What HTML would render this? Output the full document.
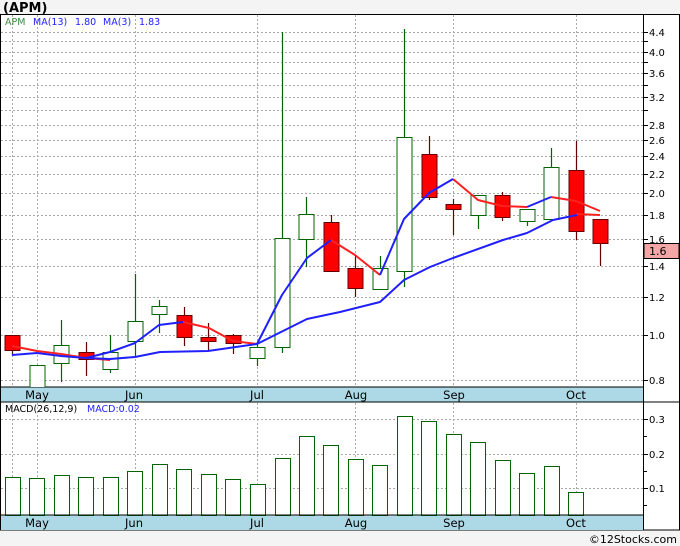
<!DOCTYPE html>
<html><head><meta charset="utf-8"><style>
html,body{margin:0;padding:0;background:#f4f4f4;}
svg{display:block;font-family:"DejaVu Sans","Liberation Sans",sans-serif;}
</style></head><body>
<svg width="680" height="546" viewBox="0 0 680 546" xmlns="http://www.w3.org/2000/svg">
<rect x="0" y="0" width="680" height="546" fill="#f4f4f4"/>
<text x="3" y="12" font-size="13" font-weight="bold" fill="#000">(APM)</text>
<rect x="0.5" y="14.5" width="679" height="515.5" fill="#fff" stroke="#000"/>
<rect x="1" y="387" width="642" height="15" fill="#add8e6"/>
<rect x="1" y="515" width="642" height="15" fill="#add8e6"/>
<line x1="0" y1="387" x2="643" y2="387" stroke="#000"/>
<line x1="0" y1="402" x2="680" y2="402" stroke="#000"/>
<line x1="0" y1="515" x2="643" y2="515" stroke="#000"/>
<line x1="643.5" y1="14" x2="643.5" y2="530" stroke="#000"/>
<g stroke="#aaa" stroke-dasharray="2,2" stroke-width="1">
<path d="M12.5 15V387M37.5 15V387M135.5 15V387M257.5 15V387M355.5 15V387M453.5 15V387M576.5 15V387"/>
<path d="M12.5 403V515M37.5 403V515M135.5 403V515M257.5 403V515M355.5 403V515M453.5 403V515M576.5 403V515"/>
<path d="M1 32.5H643M1 41.5H643M1 52.5H643M1 62.5H643M1 73.5H643M1 85.5H643M1 97.5H643M1 110.5H643M1 125.5H643M1 140.5H643M1 156.5H643M1 174.5H643M1 193.5H643M1 215.5H643M1 239.5H643M1 266.5H643M1 297.5H643M1 335.5H643M1 380.5H643"/>
<path d="M1 419.5H643M1 454.5H643M1 488.5H643"/>
</g>
<g stroke="#000"><path d="M643 32.5h5M643 41.5h5M643 52.5h5M643 62.5h5M643 73.5h5M643 85.5h5M643 97.5h5M643 110.5h5M643 125.5h5M643 140.5h5M643 156.5h5M643 174.5h5M643 193.5h5M643 215.5h5M643 239.5h5M643 266.5h5M643 297.5h5M643 335.5h5M643 380.5h5M643 419.5h5M643 454.5h5M643 488.5h5M643 436.5h4M643 471.5h4M643 505.5h4"/></g>
<g font-size="10" fill="#000">
<text x="649" y="36">4.4</text><text x="649" y="56">4.0</text><text x="649" y="77">3.6</text><text x="649" y="101">3.2</text><text x="649" y="129">2.8</text><text x="649" y="144">2.6</text><text x="649" y="160">2.4</text><text x="649" y="178">2.2</text><text x="649" y="197">2.0</text><text x="649" y="219">1.8</text><text x="649" y="243">1.6</text><text x="649" y="270">1.4</text><text x="649" y="301">1.2</text><text x="649" y="339">1.0</text><text x="649" y="384">0.8</text>
<text x="649" y="423">0.3</text><text x="649" y="458">0.2</text><text x="649" y="492">0.1</text>
</g>
<rect x="644" y="243.5" width="35" height="15" fill="#f4a6a6" stroke="#000"/>
<text x="649" y="255" font-size="11" fill="#000">1.6</text>
<g font-size="11.5" fill="#000" text-anchor="middle">
<text x="37" y="399">May</text><text x="134" y="399">Jun</text><text x="257" y="399">Jul</text><text x="356" y="399">Aug</text><text x="454" y="399">Sep</text><text x="576" y="399">Oct</text>
<text x="37" y="527">May</text><text x="134" y="527">Jun</text><text x="257" y="527">Jul</text><text x="356" y="527">Aug</text><text x="454" y="527">Sep</text><text x="576" y="527">Oct</text>
</g>
<g font-size="9.5">
<text x="5" y="25" fill="#3a8a3a">APM</text>
<text x="33" y="25" fill="#2222ff">MA(13)</text>
<text x="75" y="25" fill="#2222ff">1.80</text>
<text x="103" y="25" fill="#2222ff">MA(3)</text>
<text x="139" y="25" fill="#2222ff">1.83</text>
<text x="5" y="412" fill="#000">MACD(26,12,9)</text>
<text x="87" y="412" fill="#2222ff">MACD:0.02</text>
</g>
<svg x="0" y="15" width="643" height="372" overflow="hidden">
<g transform="translate(0,-15)">
<g stroke-width="1.2">
<g stroke="#660000">
<path d="M12.5 335V356M86.5 342V376M184.5 307V346M208.5 323V350M233.5 334V354M331.5 215V271M355.5 255V297M429.5 136V200M453.5 199V235M502.5 192V221M576.5 141V240M600.5 219V266"/>
</g>
<g stroke="#006400">
<path d="M37.5 365V392M61.5 320V382M110.5 335V373M135.5 274V357M159.5 300V333M257.5 343V366M282.5 32V353M306.5 197V267M380.5 256V289M404.5 29V287M478.5 195V229M527.5 209V226M551.5 148V219"/>
</g>
</g>
<g fill="#ff0000" stroke="#660000" stroke-width="1">
<rect x="5" y="335.5" width="15" height="15"/>
<rect x="79" y="352.5" width="15" height="7"/>
<rect x="177" y="315.5" width="15" height="22"/>
<rect x="201" y="337.5" width="15" height="4"/>
<rect x="226" y="335.5" width="15" height="8"/>
<rect x="324" y="222.5" width="15" height="49"/>
<rect x="348" y="268.5" width="15" height="20"/>
<rect x="422" y="154.5" width="15" height="43"/>
<rect x="446" y="204.5" width="15" height="5"/>
<rect x="495" y="195.5" width="15" height="22"/>
<rect x="569" y="170.5" width="15" height="61"/>
<rect x="593" y="219.5" width="15" height="24"/>
</g>
<g fill="#fff" stroke="#006400" stroke-width="1">
<rect x="30" y="365.5" width="15" height="30"/>
<rect x="54" y="345.5" width="15" height="18"/>
<rect x="103" y="352.5" width="15" height="17"/>
<rect x="128" y="321.5" width="15" height="20"/>
<rect x="152" y="306.5" width="15" height="8"/>
<rect x="250" y="347.5" width="15" height="11"/>
<rect x="275" y="238.5" width="15" height="109"/>
<rect x="299" y="214.5" width="15" height="25"/>
<rect x="373" y="268.5" width="15" height="21"/>
<rect x="397" y="137.5" width="15" height="134"/>
<rect x="471" y="195.5" width="15" height="20"/>
<rect x="520" y="209.5" width="15" height="12"/>
<rect x="544" y="167.5" width="15" height="52"/>
</g>
<g fill="none" stroke-width="2" stroke-linejoin="round">
<polyline stroke="#ff2020" points="12,346 37,351 61,354 86,358 110,360"/>
<polyline stroke="#ff2020" points="183,322 209,328 233,341 257,344"/>
<polyline stroke="#ff2020" points="331,240 355,255 380,275"/>
<polyline stroke="#ff2020" points="453,179 478,200 502,206 527,207"/>
<polyline stroke="#ff2020" points="551,197 576,201 600,211"/>
<polyline stroke="#ff2020" points="576,214 600,215"/>
<polyline stroke="#2020ff" points="12,355 37,353 61,356 86,358 110,359 135,357 160,352 208,351 257,344 307,319 340,312 380,302 404,280 430,267 453,258 503,240 527,233 553,220 577,215"/>
<polyline stroke="#2020ff" points="86,358 110,352 135,343 159,325 183,322"/>
<polyline stroke="#2020ff" points="257,344 282,295 307,258 331,240"/>
<polyline stroke="#2020ff" points="380,275 404,219 429,193 453,179"/>
<polyline stroke="#2020ff" points="527,207 551,197"/>
</g>
</g>
</svg>
<g fill="#fff" stroke="#006400" stroke-width="1">
<rect x="5.5" y="477.5" width="15" height="38"/>
<rect x="29.5" y="478.5" width="15" height="37"/>
<rect x="54.5" y="475.5" width="15" height="40"/>
<rect x="78.5" y="477.5" width="15" height="38"/>
<rect x="103.5" y="477.5" width="15" height="38"/>
<rect x="127.5" y="471.5" width="15" height="44"/>
<rect x="152.5" y="464.5" width="15" height="51"/>
<rect x="176.5" y="469.5" width="15" height="46"/>
<rect x="201.5" y="474.5" width="15" height="41"/>
<rect x="225.5" y="479.5" width="15" height="36"/>
<rect x="250.5" y="484.5" width="15" height="31"/>
<rect x="275.5" y="458.5" width="15" height="57"/>
<rect x="299.5" y="436.5" width="15" height="79"/>
<rect x="323.5" y="445.5" width="15" height="70"/>
<rect x="348.5" y="459.5" width="15" height="56"/>
<rect x="372.5" y="465.5" width="15" height="50"/>
<rect x="397.5" y="416.5" width="15" height="99"/>
<rect x="421.5" y="421.5" width="15" height="94"/>
<rect x="446.5" y="434.5" width="15" height="81"/>
<rect x="470.5" y="442.5" width="15" height="73"/>
<rect x="495.5" y="460.5" width="15" height="55"/>
<rect x="519.5" y="473.5" width="15" height="42"/>
<rect x="544.5" y="466.5" width="15" height="49"/>
<rect x="568.5" y="492.5" width="15" height="23"/>
</g>
<line x1="0" y1="515" x2="643" y2="515" stroke="#000"/>
<text x="677" y="543" font-size="11" fill="#000" text-anchor="end">©12Stocks.com</text>
</svg>
</body></html>
